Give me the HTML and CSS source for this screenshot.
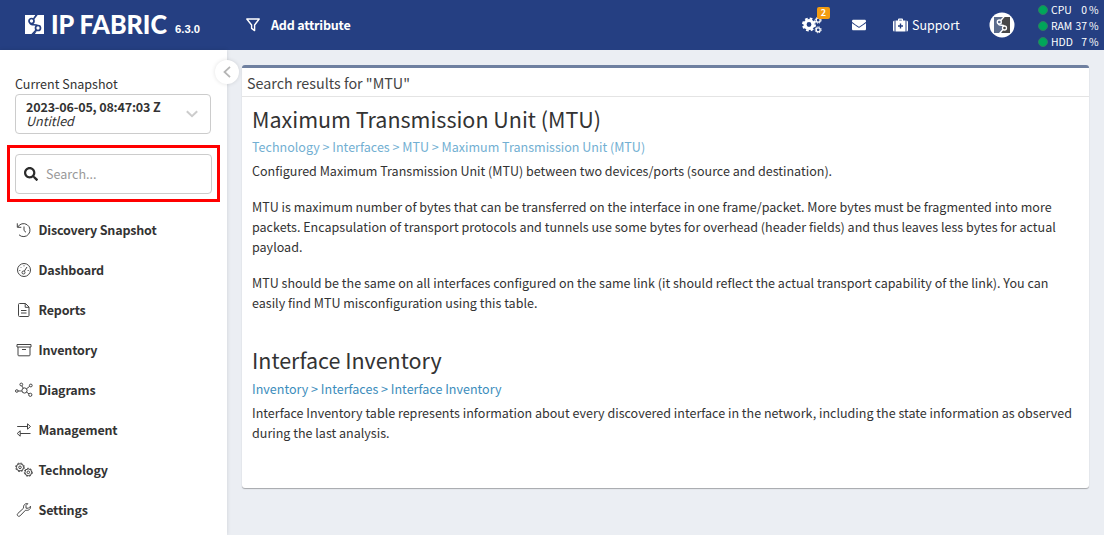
FILE: index.html
```html
<!DOCTYPE html>
<html lang="en">
<head>
<meta charset="utf-8">
<title>IP Fabric</title>
<link rel="stylesheet" href="styles.css">
</head>
<body>
<header class="topbar">
  <div class="brand">
    <svg class="brand-mark" width="143" height="32" viewBox="0 -5 143 32">
      <path fill="#fff" d="M0 1h19v19H0z"/>
      <path fill="#253f82" d="M10.500 .5h2L9 4.500zM7 20.500h2.500l2.500-3.500z"/>
      <g fill="none" stroke="#253f82" stroke-width="1.700">
        <circle cx="6.500" cy="7" r="2.500"/><circle cx="13" cy="14" r="2.500"/>
        <path d="M8.300 5.200l3.700-4.700M5 9c1 3.200 5.500.6 7.500 2.700M11.400 15.900L7 20.500"/>
      </g>
      <text class="brand-name" x="26" y="20" textLength="116" lengthAdjust="spacingAndGlyphs">IP FABRIC</text>
    </svg>
    <span class="version">6.3.0</span>
  </div>
  <div class="add-attribute">
    <svg width="14" height="14" viewBox="0 0 14 14" fill="none" stroke="#fff" stroke-width="1.400" stroke-linejoin="round"><path d="M.8 1h12.400L8.600 7v5.600L5.600 10.400V7z"/></svg>
    <span>Add attribute</span>
  </div>
  <div class="tools">
    <div class="jobs">
      <svg width="20" height="18" viewBox="0 0 20 18" fill="none" stroke="#fff">
        <circle cx="7" cy="8.500" r="4" stroke-width="3.200"/><circle cx="7" cy="8.500" r="6" stroke-width="2" stroke-dasharray="2.700 2.010"/>
        <circle cx="16.200" cy="4.200" r="2" stroke-width="1.300"/><circle cx="16.200" cy="4.200" r="3" stroke-width="1" stroke-dasharray="1.400 .956"/>
        <circle cx="16.200" cy="13.800" r="2" stroke-width="1.300"/><circle cx="16.200" cy="13.800" r="3" stroke-width="1" stroke-dasharray="1.400 .956"/>
      </svg>
      <span class="badge">2</span>
    </div>
    <svg class="mail" width="14" height="14" viewBox="0 0 512 512" fill="#fff"><path d="M502.3 190.8c3.9-3.1 9.7-.2 9.7 4.7V400c0 26.5-21.5 48-48 48H48c-26.5 0-48-21.5-48-48V195.600c0-5 5.700-7.800 9.700-4.700 22.400 17.400 52.100 39.500 154.100 113.600 21.100 15.400 56.700 47.800 92.200 47.600 35.700.3 72-32.800 92.300-47.600 102-74.100 131.600-96.300 154-113.700zM256 320c23.200.4 56.600-29.200 73.400-41.400 132.700-96.300 142.800-104.700 173.400-128.700 5.800-4.500 9.200-11.500 9.200-18.900v-19c0-26.500-21.500-48-48-48H48c-26.500 0-48 21.500-48 48v19c0 7.400 3.400 14.300 9.200 18.900 30.600 23.900 40.700 32.400 173.400 128.700 16.800 12.200 50.200 41.800 73.400 41.400z"/></svg>
    <div class="support">
      <svg width="15" height="14" viewBox="0 0 15 14"><path fill="#fff" d="M0 4a1.500 1.500 0 0 1 1.500-1.500V13.500A1.500 1.500 0 0 1 0 12zM15 4a1.500 1.500 0 0 0-1.500-1.500V13.500A1.500 1.500 0 0 0 15 12zM2.500 2.500h2.500V1.500A1 1 0 0 1 6 .5h3a1 1 0 0 1 1 1v1h2.500v11h-10zM6.200 1.700v.8h2.600v-.8zM6.800 5.500v1.800H5v1.400h1.800v1.800h1.400V8.700H10V7.300H8.200V5.500z"/></svg>
      <span>Support</span>
    </div>
    <svg class="avatar" width="26" height="26" viewBox="0 0 26 26">
      <circle cx="13" cy="13" r="12.500" fill="#fff"/>
      <path fill="#5b6c8c" d="M5 5h8v16H5z"/><path fill="#484848" d="M13 5h8v16h-8z"/>
      <g fill="none" stroke="#fff" stroke-width="1.300"><circle cx="10.300" cy="10" r="2"/><circle cx="15.500" cy="16" r="2"/><path d="M11.800 8.500L15.200 4.500M9.300 11.800c.7 2.700 5 .4 5.700 2.200M14 17.500L10.500 21.500"/></g>
    </svg>
  </div>
  <div class="stats">
    <div class="stat"><i></i><b>CPU</b><em>0</em><u>%</u></div>
    <div class="stat"><i></i><b>RAM</b><em>37</em><u>%</u></div>
    <div class="stat"><i></i><b>HDD</b><em>7</em><u>%</u></div>
  </div>
</header>
<div class="layout">
  <aside class="sidebar">
    <div class="label">Current Snapshot</div>
    <div class="snapshot">
      <div><strong>2023-06-05, 08:47:03 Z</strong><em>Untitled</em></div>
      <svg width="12" height="8" viewBox="0 0 12 8" fill="none" stroke="#ccc" stroke-width="2"><path d="M.8 1.200L6 6.200l5.200-5"/></svg>
    </div>
    <div class="search">
      <svg width="14" height="14" viewBox="0 0 512 512" fill="#2b2b2b"><path d="M505 442.700L405.300 343c-4.500-4.500-10.600-7-17-7H372c27.600-35.300 44-79.700 44-128C416 93.100 322.900 0 208 0S0 93.100 0 208s93.100 208 208 208c48.300 0 92.700-16.400 128-44v16.300c0 6.400 2.500 12.500 7 17l99.700 99.700c9.400 9.400 24.600 9.400 33.900 0l28.300-28.300c9.400-9.400 9.400-24.600.1-34zM208 336c-70.700 0-128-57.200-128-128 0-70.700 57.200-128 128-128 70.700 0 128 57.200 128 128 0 70.700-57.200 128-128 128z"/></svg>
      <span>Search...</span>
    </div>
    <nav class="menu">
      <a><svg viewBox="0 0 18 16"><path d="M2.800 5A6.500 6.500 0 1 1 4 12.800M2.300 1.300V5.300H6.300M9 4.500V8.500L11 10.300"/></svg><span>Discovery Snapshot</span></a>
      <a><svg viewBox="0 0 18 16"><circle cx="9" cy="8" r="6.500"/><circle cx="8.500" cy="10.500" r="1.500"/><path d="M9.300 9.200L12 5M4.300 8.500h1M5.500 5l.6.600M9 3.300v1M13.700 8.500h-1"/></svg><span>Dashboard</span></a>
      <a><svg viewBox="0 0 18 16"><path d="M4.500 1.500H10.500L14 5V13.500a1 1 0 0 1-1 1H4.500a1 1 0 0 1-1-1V2.500a1 1 0 0 1 1-1zM10.200 1.500V5.300H14M6 8.500h5.500M6 11h5.500"/></svg><span>Reports</span></a>
      <a><svg viewBox="0 0 18 16"><path d="M2 2.500H16V5H2zM3 5V13a.8.8 0 0 0 .8.800H14.200a.8.8 0 0 0 .8-.8V5M7 7.500h4"/></svg><span>Inventory</span></a>
      <a><svg viewBox="0 0 18 16"><circle cx="9.500" cy="8.500" r="2.600"/><circle cx="1.800" cy="9" r="1.300"/><circle cx="6.300" cy="2.500" r="1.400"/><circle cx="15.800" cy="3.500" r="1.400"/><circle cx="15.300" cy="12.800" r="1.600"/><path d="M3 9H6.900M6.800 3.900L8.300 6.200M11.500 6.800L14.700 4.300M11.600 10.100L14 11.900"/></svg><span>Diagrams</span></a>
      <a><svg viewBox="0 0 18 16"><path d="M2.200 4.500H12.500M12.500 1.800L15.500 4.500L12.500 7.200zM15.500 11.500H5.200M5.200 8.800L2.200 11.500L5.200 14.200z"/></svg><span>Management</span></a>
      <a><svg viewBox="0 0 18 16"><circle cx="5" cy="5.300" r="1.300"/><circle cx="13.300" cy="10.300" r="1.300"/><circle cx="5" cy="5.300" r="3.600"/><circle cx="13.300" cy="10.300" r="3.400"/><g stroke-dasharray="1.800 1.600"><circle cx="5" cy="5.300" r="4.300"/><circle cx="13.300" cy="10.300" r="4"/></g></svg><span>Technology</span></a>
      <a><svg viewBox="0 0 18 16"><path d="M12.800 1.700L11 3.500V6.200H13.500L15.500 4.200C16 7 13.500 9 10.500 8.200L5 13.900C3.500 15.200 1.300 13.200 2.700 11.600L8.600 6.100C8 3.500 10 1 12.800 1.700z"/></svg><span>Settings</span></a>
    </nav>
    <div class="highlight"></div>
    <div class="collapse"><svg width="8" height="12" viewBox="0 0 8 12" fill="none" stroke="#b5b5b5" stroke-width="1.800"><path d="M7 .8L1.500 6L7 11.200"/></svg></div>
  </aside>
  <main class="main">
    <section class="card">
      <div class="card-title">Search results for "MTU"</div>
      <article class="result">
        <h2>Maximum Transmission Unit (MTU)</h2>
        <div class="crumbs light">Technology &gt; Interfaces &gt; MTU &gt; Maximum Transmission Unit (MTU)</div>
        <p>Configured Maximum Transmission Unit (MTU) between two devices/ports (source and destination).</p>
        <p>MTU is maximum number of bytes that can be transferred on the interface in one frame/packet. More bytes must be fragmented into more<br>packets. Encapsulation of transport protocols and tunnels use some bytes for overhead (header fields) and thus leaves less bytes for actual<br>payload.</p>
        <p>MTU should be the same on all interfaces configured on the same link (it should reflect the actual transport capability of the link). You can<br>easily find MTU misconfiguration using this table.</p>
      </article>
      <article class="result">
        <h2>Interface Inventory</h2>
        <div class="crumbs">Inventory &gt; Interfaces &gt; Interface Inventory</div>
        <p>Interface Inventory table represents information about every discovered interface in the network, including the state information as observed<br>during the last analysis.</p>
      </article>
    </section>
  </main>
</div>
</body>
</html>
```
FILE: styles.css
```css
* { box-sizing: border-box; }
body { margin: 0; height: 535px; overflow: hidden; font: 12.545px/20px "Noto Sans CJK SC", sans-serif; color: #333; background: #ebeef3; white-space: nowrap; }
svg { flex: none; display: block; overflow: visible; }
.topbar { height: 50px; background: #253f82; color: #fff; display: flex; align-items: center; }
.brand { width: 246px; padding-left: 25px; display: flex; align-items: center; gap: 7px; }
.brand-mark { margin-top: -1px; }
.brand-name { font: 900 26px Lato, sans-serif; fill: #fff; }
.version { font: bold 11.3px/14px "Liberation Sans", sans-serif; margin-top: 8px; }
.add-attribute { display: flex; align-items: center; gap: 11px; font-weight: bold; letter-spacing: -.2px; }
.tools { display: flex; align-items: center; margin-left: auto; }
.jobs { position: relative; width: 20px; margin-right: 30px; }
.badge { position: absolute; left: 15px; top: -9px; width: 13px; height: 12px; border-radius: 2px; background: #f39c12; font: bold 9px/12px "Noto Sans CJK SC", sans-serif; text-align: center; }
.mail { margin-right: 27px; }
.support { display: flex; align-items: center; gap: 4px; width: 96px; }
.stats { margin-left: 23px; width: 66px; font-size: 10.4px; line-height: 16px; padding-top: 1px; }
.stat { display: flex; align-items: center; height: 16px; }
.stat i { width: 10px; height: 10px; border-radius: 50%; background: #00a65a; border: 1px solid #2f7a65; margin-right: 3px; }
.stat b { font-weight: normal; width: 22px; }
.stat em { font-style: normal; width: 14px; text-align: right; }
.stat u { text-decoration: none; margin-left: 2px; }
.layout { display: flex; height: 485px; }
.sidebar { position: relative; flex: none; width: 227px; background: #fff; padding: 24px 15px 0; box-shadow: 0 0 4px rgba(0,0,0,.12); }
.label { height: 20px; }
.snapshot { width: 196px; height: 40px; border: 1px solid #ccc; border-radius: 4px; padding: 0 12px 0 10px; display: flex; align-items: center; justify-content: space-between; line-height: 14px; }
.snapshot strong, .snapshot em { display: block; }
.snapshot strong { letter-spacing: -.18px; }
.search { width: 197px; height: 40px; margin-top: 20px; border: 1px solid #ccc; border-radius: 4px; padding-left: 8px; display: flex; align-items: center; gap: 8px; color: #999; }
.menu { padding-top: 16px; }
.menu a { display: flex; align-items: center; height: 40px; gap: 5.5px; font-weight: bold; letter-spacing: -.18px; }
.menu svg { width: 18px; height: 16px; fill: none; stroke: #444; stroke-width: 1; }
.highlight { position: absolute; left: 7px; top: 95px; width: 213px; height: 57px; border: 3px solid #f00; }
.collapse { position: absolute; left: 215px; top: 10px; width: 24px; height: 24px; border-radius: 50%; background: #fff; box-shadow: 0 0 4px rgba(0,0,0,.12); display: flex; align-items: center; justify-content: center; }
.main { flex: 1; min-width: 0; padding: 15px 15px 0; }
.card { height: 423px; background: #fff; border-top: 3px solid #6f80a0; border-radius: 3px; box-shadow: 0 1px 1px rgba(0,0,0,.3); }
.card-title { height: 29px; line-height: 30px; padding-left: 5px; font-size: 14.34px; border-bottom: 1px solid #e4e4e4; color: #444; }
.result { padding: 8px 10px 0; height: 242px; }
.result + .result { height: 140px; padding-top: 7px; }
.result h2 { margin: 0 0 4px; font-size: 21.49px; line-height: 28px; font-weight: normal; }
.result + .result h2 { margin-bottom: 5px; }
.crumbs { color: #3c8dbc; margin-bottom: 4px; }
.crumbs.light { color: #72afd2; }
.result p { margin: 0 0 16px; }
```
